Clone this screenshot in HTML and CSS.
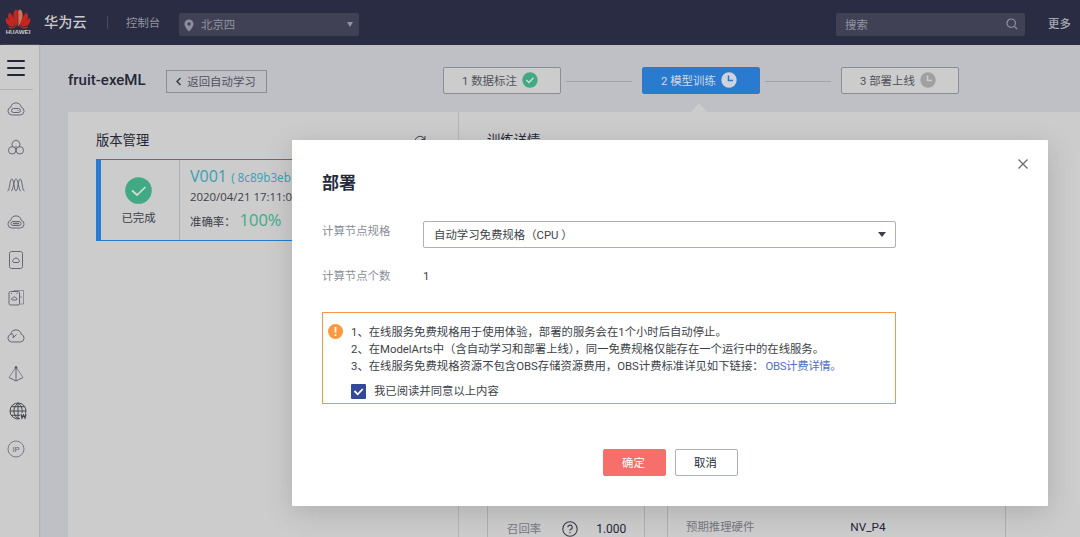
FILE: index.html
```
<!DOCTYPE html>
<html lang="zh-CN">
  <head>
    <meta charset="UTF-8" />
    <meta name="viewport" content="width=device-width, initial-scale=1.0" />
    <title>fruit-exeML</title>
    <link rel="stylesheet" href="styles.css">
  </head>
  <body>
    <header class="topbar">
      <div class="logo">
        <svg width="26" height="20" viewBox="0 0 26 20">
          <g fill="#c4271f">
            <path d="M12.6 17.5C8.2 11.5 7.2 5 9.800 1.200C11.500 0.300 12.700 1 12.800 2.500Z" />
            <path d="M13.400 17.500C17.800 11.500 18.800 5 16.200 1.200C14.500 0.300 13.300 1 13.200 2.500Z" fill="#d4705a" />
            <path d="M11.800 17.700C10.300 12 7.500 6.500 5 3.600C2.300 5.500 2.300 8.800 5 11.800Z" />
            <path d="M14.200 17.700C15.700 12 18.500 6.500 21 3.600C23.700 5.500 23.700 8.800 21 11.800Z" />
            <path d="M11 18C8 14 4.500 10.500 1.300 8.700C-0.100 12 1.200 15.300 4.500 17Z" />
            <path d="M15 18C18 14 21.500 10.500 24.700 8.700C26.100 12 24.800 15.300 21.500 17Z" />
            <path d="M10.500 18.500L2.800 17.500C4.300 19.900 7 20.200 10.500 18.500Z" />
            <path d="M15.500 18.500L23.200 17.500C21.700 19.900 19 20.200 15.500 18.500Z" />
          </g>
        </svg>
        <span>HUAWEI</span>
      </div>
      <div class="brand">华为云</div>
      <div class="line"></div>
      <div class="console">控制台</div>
      <div class="region">
        <svg width="10" height="13" viewBox="0 0 10 13"><path fill="#8e8f9a" fill-rule="evenodd" d="M5 0.500A4.500 4.500 0 0 0 0.500 5C0.500 8 5 12.500 5 12.500S9.500 8 9.500 5A4.500 4.500 0 0 0 5 0.500ZM5 3.200A1.700 1.700 0 1 1 5 6.600A1.700 1.700 0 1 1 5 3.200Z" /></svg>
        <span>北京四</span>
        <i class="arrow"></i>
      </div>
      <div class="search">
        <span>搜索</span>
        <svg width="12" height="12" viewBox="0 0 12 12" fill="none" stroke="#9394a0" stroke-width="1.200"><circle cx="5.200" cy="5.200" r="4.200" /><path d="M8.300 8.300L11 11" /></svg>
      </div>
      <div class="more">更多</div>
    </header>

    <div class="layout">
      <nav class="sidebar">
        <div class="menu"><i></i><i></i><i></i></div>
        <ul>
          <li><svg viewBox="0 0 18 18"><path d="M4.500 15A4 4 0 0 1 3.800 7.200A5.300 5.300 0 0 1 14.200 7.200A4 4 0 0 1 13.500 15Z" /><rect x="4.500" y="8.500" width="9" height="4" rx="2" /><path d="M10.500 10.500h1" /></svg></li>
          <li><svg viewBox="0 0 18 18"><path d="M6 9A4 4 0 1 1 12 9" /><circle cx="5.200" cy="12.300" r="3.700" /><circle cx="12.800" cy="12.300" r="3.700" /><path d="M9 8v3" /></svg></li>
          <li><svg viewBox="0 0 18 18"><path d="M0.500 15C3 15 2.500 3 4.800 3S7 15 9 15S11 3 13.200 3S15 15 17.500 15M4 15C6.500 15 6.500 3 9 3S11.500 15 14 15" /></svg></li>
          <li><svg viewBox="0 0 18 18"><path d="M4.500 15A4 4 0 0 1 3.800 7.200A5.300 5.300 0 0 1 14.200 7.200A4 4 0 0 1 13.500 15Z" /><rect x="4" y="8.500" width="10" height="4" rx="2" /><path stroke-width="1.500" d="M6 10.500h6" /></svg></li>
          <li><svg viewBox="0 0 18 18"><rect x="2.500" y="0.500" width="13" height="17" rx="2" /><path d="M6.500 11.500A1.500 1.500 0 0 1 6.500 8.800A2.600 2.600 0 0 1 11.500 8.800A1.500 1.500 0 0 1 11.500 11.500Z" /></svg></li>
          <li><svg viewBox="0 0 18 18"><rect x="2" y="2.500" width="10.500" height="13.500" rx="1.500" /><path opacity=".6" d="M7 2.500V1.500H16.500V15H12.500M13 8h2" /><path d="M5.500 11A1 1 0 0 1 5.500 9A2 2 0 0 1 9 9A1 1 0 0 1 9 11ZM4 4.500h1M9.500 4.500h1" /></svg></li>
          <li><svg viewBox="0 0 18 18"><path d="M4.500 15A4 4 0 0 1 3.800 7.200A5.300 5.300 0 0 1 14.200 7.200A4 4 0 0 1 13.500 15Z" /><path d="M4 7C6 6.500 7 8 6 11M6 11L9.500 7.500" /></svg></li>
          <li><svg viewBox="0 0 18 18"><path opacity=".7" d="M9 2L2 12.500M9 2L16 12.500" /><path d="M9 2V16M2 12.500L9 16L16 12.500" /><circle cx="9" cy="2.500" r="1" fill="#3a3b47" /></svg></li>
          <li class="globe"><svg viewBox="0 0 18 18"><path d="M16.600 11.500A8 8 0 1 0 11 16.700M9 1V17M1 9H17M2.500 4.700H15.500M2.500 13.300H11M9 1C3.500 6 3.500 12 9 17M9 1C13 4 13.500 8 13 11" /><path stroke-width="1.300" d="M12 12L13 16L14.500 13L16 16L17 12" /></svg></li>
          <li class="ip"><svg viewBox="0 0 18 18"><circle cx="9" cy="9" r="8" /><text x="9" y="11.600" text-anchor="middle">IP</text></svg></li>
        </ul>
      </nav>

      <main>
        <div class="page-head">
          <h1>fruit-exeML</h1>
          <button class="back"><svg width="7" height="9" viewBox="0 0 7 9"><path d="M5.500 1L2 4.500L5.500 8" fill="none" stroke="#3d3f4a" stroke-width="1.500" /></svg>返回自动学习</button>
          <div class="steps">
            <div class="step">1 数据标注
              <svg width="16" height="16" viewBox="0 0 16 16"><circle cx="8" cy="8" r="7.700" fill="#41aa85" /><path d="M4.300 8L7 10.500L11.500 5.800" fill="none" stroke="#d5ddd9" stroke-width="1.300" /></svg>
            </div>
            <i class="link"></i>
            <div class="step active">2 模型训练
              <svg width="16" height="16" viewBox="0 0 16 16"><circle cx="8" cy="8" r="7.700" fill="#d0d4da" /><path d="M7.500 3.500V8.500H12" fill="none" stroke="#2a7acf" stroke-width="1.600" /></svg>
            </div>
            <i class="link"></i>
            <div class="step">3 部署上线
              <svg width="16" height="16" viewBox="0 0 16 16"><circle cx="8" cy="8" r="7.700" fill="#a0a0a1" /><path d="M7.500 3.500V8.500H12" fill="none" stroke="#cccccc" stroke-width="1.600" /></svg>
            </div>
          </div>
        </div>

        <div class="panel">
          <section class="versions">
            <div class="versions-head">
              <h2>版本管理</h2>
              <svg width="12" height="12" viewBox="0 0 12 12" fill="none" stroke="#3d3f4a"><path d="M10.500 4A5 5 0 1 0 11 7M11 1V4.500H7.500" /></svg>
            </div>
            <div class="version">
              <div class="state">
                <svg width="27" height="27" viewBox="0 0 27 27"><circle cx="13.500" cy="13.500" r="13.300" fill="#41aa85" /><path d="M7 13.500L12 18L20.500 10" fill="none" stroke="#d3dcd8" stroke-width="1.700" /></svg>
                <span>已完成</span>
              </div>
              <div class="info">
                <div class="name">V001 <small>( 8c89b3eb )</small></div>
                <div class="time">2020/04/21 17:11:08</div>
                <div class="rate">准确率： <b>100%</b></div>
              </div>
            </div>
          </section>
          <section class="detail">
            <h2>训练详情</h2>
            <div class="cards">
              <div class="card score">
                <span>召回率</span>
                <svg width="16" height="16" viewBox="0 0 16 16"><circle cx="8" cy="8" r="7.200" fill="none" stroke="#3d3f4a" stroke-width="1.100" /><path d="M5.800 6.300A2.200 2.200 0 1 1 8.800 8.300Q8 8.700 8 9.700M8 11v1.300" fill="none" stroke="#3d3f4a" stroke-width="1.200" /></svg>
                <b>1.000</b>
              </div>
              <div class="card hardware">
                <span>预期推理硬件</span>
                <b>NV_P4</b>
              </div>
            </div>
          </section>
        </div>
      </main>
    </div>

    <div class="dialog">
      <svg class="close" width="12" height="12" viewBox="0 0 12 12"><path d="M1.500 1.500L10.500 10.500M10.500 1.500L1.500 10.500" stroke="#6a6d7c" stroke-width="1.400" /></svg>
      <h3>部署</h3>
      <div class="row">
        <label>计算节点规格</label>
        <div class="select"><span>自动学习免费规格（CPU ）</span><i class="arrow"></i></div>
      </div>
      <div class="row count">
        <label>计算节点个数</label>
        <span>1</span>
      </div>
      <div class="notice">
        <svg width="15" height="15" viewBox="0 0 15 15"><circle cx="7.500" cy="7.500" r="7.500" fill="#f9983f" /><path d="M7.500 3V8.700M7.500 10.200V12" stroke="#fff" stroke-width="1.700" /></svg>
        <div class="notice-text">
          <p>1、在线服务免费规格用于使用体验，部署的服务会在1个小时后自动停止。</p>
          <p>2、在ModelArts中（含自动学习和部署上线），同一免费规格仅能存在一个运行中的在线服务。</p>
          <p>3、在线服务免费规格资源不包含OBS存储资源费用，OBS计费标准详见如下链接： <a>OBS计费详情。</a></p>
          <div class="agree">
            <svg width="15" height="15" viewBox="0 0 15 15"><rect width="15" height="15" rx="1" fill="#344899" /><path d="M3.500 7L6.700 10.300L11.800 5" fill="none" stroke="#fff" stroke-width="1.800" /></svg>
            <span>我已阅读并同意以上内容</span>
          </div>
        </div>
      </div>
      <div class="buttons">
        <button class="ok">确定</button>
        <button class="cancel">取消</button>
      </div>
    </div>
  </body>
</html>
```
FILE: styles.css
```
* {
  box-sizing: border-box;
}
body {
  margin: 0;
  width: 1080px;
  height: 537px;
  overflow: hidden;
  position: relative;
  font-family: Roboto, "Noto Sans CJK SC", sans-serif;
  font-size: 11.4px;
  color: #3d3f4a;
  background-color: #bfc0c5;
}
h1, h2, h3, p, ul {
  margin: 0;
  padding: 0;
}
svg {
  display: block;
  flex: none;
}
button {
  font-family: inherit;
  font-size: 11.4px;
  padding: 0;
}

/* top bar */
.topbar {
  display: flex;
  align-items: center;
  height: 45px;
  background-color: #292c42;
  color: #9394a0;
  white-space: nowrap;
}
.logo {
  width: 26px;
  margin-left: 5px;
  color: #c8c8cc;
  font: bold 6.200px/8px "Liberation Sans", sans-serif;
  text-align: center;
}
.logo span {
  display: block;
  margin: -1px -1px 0;
}
.brand {
  margin: -3px 0 0 13px;
  width: 62px;
  font-size: 14.200px;
  font-weight: 500;
  color: #cbcbcf;
}
.line {
  width: 1px;
  height: 13px;
  margin-left: 1px;
  background-color: #4a4c5e;
}
.console {
  margin: -2px 0 0 18px;
  width: 53px;
}
.region,
.search {
  display: flex;
  align-items: center;
  height: 23px;
  margin-top: 3px;
  background-color: #404155;
  border-radius: 2px;
}
.region {
  width: 180px;
  padding: 0 6px 0 5px;
}
.region svg {
  margin-top: 2px;
}
.region span {
  margin-left: 7px;
}
.arrow {
  margin-left: auto;
  border: 4px solid transparent;
  border-top: 5px solid #9394a0;
  border-bottom: 0;
}
.region .arrow {
  border-width: 5px 3.500px 0;
}
.search {
  width: 189px;
  margin-left: 477px;
  padding: 0 7px 0 9px;
  justify-content: space-between;
}
.more {
  margin-left: 23px;
  color: #a6a7b1;
  font-weight: 500;
}

.layout {
  display: flex;
  height: 492px;
}

/* side menu */
.sidebar {
  width: 39px;
  background-color: #cccccc;
  box-shadow: 1px 0 1px #b2b3b7;
}
.menu {
  display: flex;
  flex-direction: column;
  gap: 5px;
  width: 33px;
  height: 45px;
  padding: 15px 0 0 7px;
  border-bottom: 1px solid #b3b3b5;
}
.menu i {
  width: 18px;
  height: 2px;
  border-radius: 1px;
  background-color: #23253a;
}
.sidebar ul {
  list-style: none;
  padding: 10px 0 0 7px;
  display: flex;
  flex-direction: column;
  gap: 19.800px;
}
.sidebar li svg {
  width: 18px;
  height: 18px;
  fill: none;
  stroke: #666775;
}
.sidebar li.globe {
  padding-left: 2px;
}
.sidebar li.globe svg {
  stroke: #44464f;
}
.sidebar li.ip svg {
  stroke: #7b7c86;
}
.sidebar li text {
  font-size: 8px;
  stroke: none;
  fill: #666775;
}

main {
  flex: 1;
  padding-left: 29px;
}
.page-head {
  display: flex;
  height: 67px;
  padding-top: 22px;
}
.page-head h1 {
  width: 98px;
  font-size: 15px;
  line-height: 26px;
  font-weight: 500;
  color: #252839;
}
.back {
  display: flex;
  align-items: center;
  justify-content: center;
  gap: 5px;
  width: 101px;
  height: 23px;
  margin-top: 3px;
  padding: 0 2px 1px 0;
  border: 1px solid #8b8d95;
  background: none;
  color: #50525c;
}
.steps {
  display: flex;
  align-items: center;
  height: 27px;
  margin-left: 176px;
}
.step {
  display: flex;
  align-items: center;
  gap: 5px;
  width: 118px;
  height: 27px;
  padding: 0 0 1px 18px;
  border: 1px solid #8b8d95;
  border-radius: 2px;
  background-color: #cccccc;
  color: #50525c;
}
.step.active {
  position: relative;
  border-color: #2a7acf;
  background-color: #2a7acf;
  color: #d0d8e2;
}
.step.active::after {
  content: "";
  position: absolute;
  left: 48px;
  top: 35px;
  border: 8px solid transparent;
  border-top: 0;
  border-bottom: 9px solid #cccccc;
}
.link {
  width: 66px;
  height: 1px;
  margin: 2px 10px 0 5px;
  background-color: #a0a1a7;
}

.panel {
  display: flex;
  height: 425px;
  background-color: #cccccc;
}
.panel h2 {
  font-size: 13.300px;
  line-height: 20px;
  font-weight: 400;
  color: #252839;
}
.versions {
  width: 391px;
  padding: 19px 28px 0;
  border-right: 1px solid #b5b5b8;
}
.versions-head {
  display: flex;
  justify-content: space-between;
  align-items: center;
  padding-right: 4px;
}
.version {
  display: flex;
  height: 82px;
  margin-top: 8px;
  border: 1px solid #2a7acf;
  border-left-width: 5px;
}
.state {
  display: flex;
  flex-direction: column;
  align-items: center;
  width: 79px;
  padding: 17px 3px 0 0;
  border-right: 1px solid #b0b0b2;
}
.state span {
  margin-top: 6px;
  line-height: 17px;
}
.info {
  padding: 5px 0 0 10px;
  white-space: nowrap;
  font-family: "Open Sans", "Noto Sans CJK SC", sans-serif;
}
.name {
  font-size: 16px;
  line-height: 22px;
  color: #389fb4;
}
.name small {
  font-size: 11.700px;
}
.time {
  line-height: 18px;
}
.rate {
  line-height: 28px;
}
.rate b {
  margin-left: 1px;
  font-size: 16.500px;
  font-weight: 400;
  color: #41aa85;
}

.detail {
  padding: 19px 0 0 28px;
}
.cards {
  display: flex;
  gap: 22px;
  margin-top: 13px;
}
.card {
  display: flex;
  height: 373px;
  line-height: 16px;
  border: 1px solid #b0b0b2;
  border-bottom: 0;
  color: #77787f;
}
.card b {
  font-weight: 400;
  font-size: 12px;
  color: #252839;
}
.score {
  width: 158px;
  padding: 356px 0 0 19px;
}
.score svg {
  margin-left: 21px;
}
.score b {
  margin-left: 18px;
}
.hardware {
  width: 339px;
  padding: 354px 0 0 18px;
}
.hardware b {
  margin-left: 96px;
  font-size: 11.800px;
}

/* deploy dialog */
.dialog {
  position: absolute;
  left: 292px;
  top: 140px;
  width: 756px;
  height: 366px;
  padding: 30px;
  border-radius: 1px;
  background-color: #fff;
  box-shadow: 0 6px 28px rgba(0, 0, 0, 0.15);
}
.close {
  position: absolute;
  right: 19px;
  top: 18px;
}
.dialog h3 {
  font-size: 17px;
  line-height: 26px;
  color: #252b3a;
}
.row {
  display: flex;
  height: 27px;
  margin-top: 25px;
}
.row label {
  width: 101px;
  line-height: 20px;
  color: #8a8e99;
}
.select {
  display: flex;
  align-items: center;
  width: 473px;
  height: 27px;
  padding: 0 9px 1px 10px;
  border: 1px solid #adb0b8;
  border-radius: 2px;
}
.select .arrow {
  border-top-color: #3d3f4a;
}
.row.count {
  margin-top: 18px;
  line-height: 20px;
}
.notice {
  display: flex;
  width: 574px;
  height: 92px;
  margin-top: 19px;
  padding: 11px 0 0 5px;
  border: 1px solid #f9983f;
}
.notice-text {
  margin-left: 8px;
  font-size: 11.350px;
  line-height: 17px;
  white-space: nowrap;
}
.notice a {
  margin-left: -1px;
  letter-spacing: -0.300px;
  color: #526ecc;
}
.agree {
  display: flex;
  align-items: center;
  gap: 8px;
  margin-top: 8px;
}
.buttons {
  display: flex;
  gap: 9px;
  margin: 45px 0 0 281px;
}
.buttons button {
  width: 63px;
  height: 27px;
  padding: 0 2px 1px 0;
  border: 1px solid #adb0b8;
  border-radius: 2px;
  background-color: #fff;
  color: #252b3a;
}
.buttons .ok {
  border-color: #f66f6a;
  background-color: #f66f6a;
  color: #fff;
}
```
